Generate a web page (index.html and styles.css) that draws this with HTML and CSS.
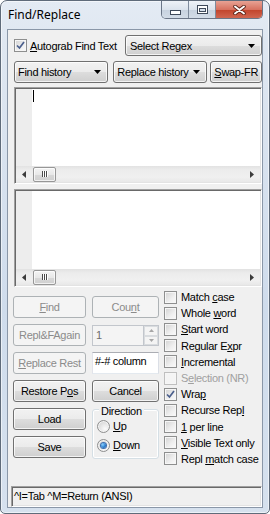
FILE: index.html
```html
<!DOCTYPE html>
<html lang="en">
<head>
    <meta charset="UTF-8">
    <meta name="viewport" content="width=device-width, initial-scale=1.0">
    <title>Find/Replace</title>
    <link rel="stylesheet" href="styles.css">
</head>
<body>
    <div class="window">
        <div class="titlebar">
            <span class="title">Find/Replace</span>
            <div class="caption">
                <span class="cap-btn cap-min">
                    <svg width="11" height="5" viewBox="0 0 11 5"><rect x="0.5" y="0.5" width="10" height="4" fill="#fff" stroke="#3f4a5a"/></svg>
                </span>
                <span class="cap-btn cap-max">
                    <svg width="11" height="9" viewBox="0 0 11 9"><rect x="0.5" y="0.5" width="10" height="8" fill="#fff" stroke="#3f4a5a"/><rect x="2.5" y="3.5" width="6" height="3" fill="#d6dfea" stroke="#3f4a5a"/></svg>
                </span>
                <span class="cap-btn cap-close">
                    <svg width="13" height="10" viewBox="0 0 13 10"><path d="M2 1.5 L11 8.5 M11 1.5 L2 8.5" stroke="#5a2319" stroke-width="3.6" stroke-linecap="round"/><path d="M2 1.5 L11 8.5 M11 1.5 L2 8.5" stroke="#fff" stroke-width="1.9" stroke-linecap="round"/></svg>
                </span>
            </div>
        </div>

        <div class="client">
            <div class="top-row">
                <label class="check autograb">
                    <span class="cb checked"><svg width="11" height="11" viewBox="0 0 11 11"><path d="M2 5.5 L4.5 8 L9 2" fill="none" stroke="#4b5f8c" stroke-width="1.7"/></svg></span>
                    <span><u>A</u>utograb Find Text</span>
                </label>
                <div class="combo regex">Select Regex<svg class="arrow" width="7" height="4" viewBox="0 0 7 4"><polygon points="0,0 7,0 3.5,4" fill="#000"/></svg></div>
            </div>

            <div class="history-row">
                <div class="combo history">Find history<svg class="arrow" width="7" height="4" viewBox="0 0 7 4"><polygon points="0,0 7,0 3.5,4" fill="#000"/></svg></div>
                <div class="combo history">Replace history<svg class="arrow" width="7" height="4" viewBox="0 0 7 4"><polygon points="0,0 7,0 3.5,4" fill="#000"/></svg></div>
                <div class="btn swap"><span><u>S</u>wap-FR</span></div>
            </div>

            <div class="editor find-edit">
                <div class="editor-body">
                    <div class="gutter"></div>
                    <div class="text-area"><span class="caret"></span></div>
                </div>
                <div class="hscroll">
                    <span class="sb-arrow"><svg width="4" height="7" viewBox="0 0 4 7"><polygon points="4,0 4,7 0,3.5" fill="#3c3c3c"/></svg></span>
                    <span class="thumb"><span class="grip"></span></span>
                    <span class="sb-arrow right"><svg width="4" height="7" viewBox="0 0 4 7"><polygon points="0,0 0,7 4,3.5" fill="#3c3c3c"/></svg></span>
                </div>
            </div>

            <div class="editor replace-edit">
                <div class="editor-body">
                    <div class="gutter"></div>
                    <div class="text-area"></div>
                </div>
                <div class="hscroll">
                    <span class="sb-arrow"><svg width="4" height="7" viewBox="0 0 4 7"><polygon points="4,0 4,7 0,3.5" fill="#3c3c3c"/></svg></span>
                    <span class="thumb"><span class="grip"></span></span>
                    <span class="sb-arrow right"><svg width="4" height="7" viewBox="0 0 4 7"><polygon points="0,0 0,7 4,3.5" fill="#3c3c3c"/></svg></span>
                </div>
            </div>

            <div class="lower">
                <div class="actions">
                    <div class="btn disabled"><span><u>F</u>ind</span></div>
                    <div class="btn disabled"><span>Cou<u>n</u>t</span></div>
                    <div class="btn disabled"><span>Repl&amp;FAgain</span></div>
                    <div class="spin">
                        <div class="spin-edit">1</div>
                        <div class="spin-btns">
                            <span class="spin-btn"><svg width="5" height="3" viewBox="0 0 5 3"><polygon points="0,3 5,3 2.5,0" fill="#a6a6a6"/></svg></span>
                            <span class="spin-btn"><svg width="5" height="3" viewBox="0 0 5 3"><polygon points="0,0 5,0 2.5,3" fill="#a6a6a6"/></svg></span>
                        </div>
                    </div>
                    <div class="btn disabled"><span><u>R</u>eplace Rest</span></div>
                    <div class="textbox">#-# column</div>
                    <div class="btn"><span>Restore P<u>o</u>s</span></div>
                    <div class="btn"><span>Cancel</span></div>
                    <div class="btn"><span>Load</span></div>
                    <div class="group">
                        <span class="group-title">Direction</span>
                        <label class="radio-row"><span class="radio"></span><span><u>U</u>p</span></label>
                        <label class="radio-row"><span class="radio checked"><span class="dot"></span></span><span><u>D</u>own</span></label>
                    </div>
                    <div class="btn"><span>Save</span></div>
                </div>

                <div class="options">
                    <label class="check"><span class="cb"></span><span>Match <u>c</u>ase</span></label>
                    <label class="check"><span class="cb"></span><span>Whole <u>w</u>ord</span></label>
                    <label class="check"><span class="cb"></span><span><u>S</u>tart word</span></label>
                    <label class="check"><span class="cb"></span><span>Regular E<u>x</u>pr</span></label>
                    <label class="check"><span class="cb"></span><span><u>I</u>ncremental</span></label>
                    <label class="check off"><span class="cb"></span><span>S<u>e</u>lection (NR)</span></label>
                    <label class="check"><span class="cb checked"><svg width="11" height="11" viewBox="0 0 11 11"><path d="M2 5.5 L4.5 8 L9 2" fill="none" stroke="#4b5f8c" stroke-width="1.7"/></svg></span><span>Wra<u>p</u></span></label>
                    <label class="check"><span class="cb"></span><span>Recurse Rep<u>l</u></span></label>
                    <label class="check"><span class="cb"></span><span><u>1</u> per line</span></label>
                    <label class="check"><span class="cb"></span><span><u>V</u>isible Text only</span></label>
                    <label class="check"><span class="cb"></span><span>Repl <u>m</u>atch case</span></label>
                </div>
            </div>

            <div class="status">^I=Tab ^M=Return (ANSI)</div>
        </div>
    </div>
</body>
</html>
```

FILE: styles.css
```css
* {
    box-sizing: border-box;
}
html, body {
    margin: 0;
    padding: 0;
}
body {
    width: 270px;
    height: 514px;
    overflow: hidden;
    background: #ffffff;
    font-family: "Liberation Sans", Arial, sans-serif;
    font-size: 11px;
    letter-spacing: -0.3px;
    color: #000;
}
u {
    text-decoration: underline;
    text-underline-offset: 1px;
}

/* window frame (Win7 style) */
.window {
    width: 270px;
    height: 514px;
    display: flex;
    flex-direction: column;
    padding: 0 6px 5px 6px;
    border: 1px solid #5f6b7a;
    border-radius: 7px 7px 5px 5px;
    background: linear-gradient(to bottom, #e4ebf4 0, #dfe7f1 40px, #cfdcec 60%, #d6e1ee 100%);
    box-shadow: inset 0 0 0 1px rgba(255, 255, 255, 0.55);
}
.titlebar {
    height: 28px;
    display: flex;
    justify-content: space-between;
    align-items: flex-start;
}
.title {
    font-family: "Noto Sans", "Open Sans", sans-serif;
    font-size: 12px;
    letter-spacing: 0;
    line-height: 28px;
    padding-left: 1px;
}
.caption {
    display: flex;
    width: 102px;
    height: 18px;
    border: 1px solid #6b7687;
    border-top: none;
    border-radius: 0 0 5px 5px;
    overflow: hidden;
}
.cap-btn {
    width: 27px;
    display: flex;
    align-items: center;
    justify-content: center;
    border-right: 1px solid #7f8b9c;
    background: linear-gradient(to bottom, #eef2f7 0, #dbe3ec 50%, #c7d2df 51%, #d3dce7 100%);
}
.cap-min svg {
    margin-top: 6px;
}
.cap-close {
    width: 46px;
    border-right: none;
    background: linear-gradient(to bottom, #e8a294 0, #d77260 50%, #c2432b 51%, #d06650 100%);
}

/* client area */
.client {
    flex: 1;
    display: flex;
    flex-direction: column;
    border: 1px solid #8a97a8;
    background: #f0f0f0;
}
.top-row {
    display: flex;
    align-items: center;
    height: 21px;
    margin: 5px 0 0 6px;
}
.check {
    display: flex;
    align-items: center;
    white-space: nowrap;
}
.autograb {
    width: 111px;
}
.cb {
    width: 13px;
    height: 13px;
    flex: none;
    margin-right: 3px;
    border: 1px solid #8e8f8f;
    background: linear-gradient(135deg, #d2d2d2 0, #efefef 60%, #fbfbfb 100%);
    box-shadow: inset 0 0 0 1px #f6f6f6;
    display: flex;
    align-items: center;
    justify-content: center;
}
.cb svg {
    display: block;
}

/* combos and buttons */
.combo,
.btn {
    height: 21px;
    border: 1px solid #707070;
    border-radius: 3px;
    background: linear-gradient(to bottom, #f2f2f2 0, #ebebeb 50%, #dddddd 51%, #cfcfcf 100%);
    box-shadow: inset 0 0 0 1px rgba(255, 255, 255, 0.75);
    white-space: nowrap;
}
.combo {
    display: flex;
    align-items: center;
    justify-content: space-between;
    padding: 0 6px 0 4px;
}
.regex {
    width: 137px;
}
.history-row {
    display: flex;
    height: 22px;
    margin: 5px 0 0 6px;
}
.history-row .combo,
.history-row .btn {
    height: 22px;
}
.history {
    width: 95px;
    padding-left: 3px;
    margin-right: 5px;
}
.history + .history {
    margin-right: 3px;
}
.swap {
    width: 52px;
}
.btn {
    display: flex;
    align-items: center;
    justify-content: center;
}
.btn.disabled {
    border-color: #adb2b5;
    background: #f4f4f4;
    box-shadow: none;
    color: #8b8b8b;
}

/* editors */
.editor {
    width: 248px;
    margin-left: 6px;
    display: flex;
    flex-direction: column;
    padding: 1px;
    border: 1px solid;
    border-color: #a0a0a0 #ffffff #ffffff #a0a0a0;
    box-shadow: inset 1px 1px 0 #696969, inset -1px -1px 0 #e3e3e3;
    background: #fff;
}
.find-edit {
    height: 97px;
    margin-top: 4px;
}
.replace-edit {
    height: 98px;
    margin-top: 5px;
}
.editor-body {
    flex: 1;
    display: flex;
}
.gutter {
    width: 16px;
    background: #ededed;
}
.text-area {
    flex: 1;
    background: #fff;
}
.caret {
    display: block;
    width: 1px;
    height: 12px;
    margin: 1px 0 0 1px;
    background: #000;
}
.hscroll {
    height: 16px;
    display: flex;
    align-items: center;
    background: linear-gradient(to bottom, #e2e2e2 0, #ececec 25%, #f0f0f0 70%, #e8e8e8 100%);
}
.sb-arrow {
    width: 16px;
    height: 16px;
    display: flex;
    align-items: center;
    justify-content: center;
}
.sb-arrow.right {
    margin-left: auto;
}
.thumb {
    width: 23px;
    height: 15px;
    margin-left: 1px;
    border: 1px solid #979797;
    border-radius: 2px;
    background: linear-gradient(to bottom, #f4f4f4 0, #e8e8e8 50%, #d8d8d8 51%, #d0d0d0 100%);
    box-shadow: inset 0 0 0 1px rgba(255, 255, 255, 0.7);
    display: flex;
    align-items: center;
    justify-content: center;
}
.grip {
    width: 6px;
    height: 6px;
    background: repeating-linear-gradient(to right, #4b4b4b 0, #4b4b4b 1px, #ffffff 1px, #ffffff 2px);
}

/* lower section */
.lower {
    display: flex;
    margin: 2px 0 0 5px;
}
.actions {
    width: 146px;
    padding-top: 7px;
    display: grid;
    grid-template-columns: 73px 67px;
    grid-template-rows: repeat(6, 22px);
    column-gap: 6px;
    row-gap: 6px;
}
.actions .btn {
    height: 22px;
}
.spin {
    display: flex;
    height: 21px;
    margin-top: 1px;
}
.spin-edit {
    width: 51px;
    border: 1px solid #c2c6cc;
    border-right: none;
    background: #f4f4f4;
    color: #6d6d6d;
    padding: 3px 0 0 3px;
}
.spin-btns {
    width: 16px;
    display: flex;
    flex-direction: column;
    border: 1px solid #c2c6cc;
}
.spin-btn {
    flex: 1;
    display: flex;
    align-items: center;
    justify-content: center;
    background: #f4f4f4;
    border: 1px solid #d9dcdf;
}
.textbox {
    border: 1px solid;
    border-color: #abadb3 #dbdfe6 #e3e9ef #e2e3ea;
    background: #fff;
    padding: 2px 0 0 2px;
}
.group {
    grid-row: 5 / span 2;
    grid-column: 2;
    height: 50px;
    margin-top: 1px;
    border: 1px solid #d5dfe5;
    border-radius: 3px;
    box-shadow: inset 0 0 0 1px #ffffff;
    padding-left: 4px;
}
.group-title {
    display: block;
    width: max-content;
    margin: -5px 0 0 2px;
    padding: 0 2px;
    line-height: 12px;
    background: #f0f0f0;
}
.radio-row {
    display: flex;
    align-items: center;
    height: 16px;
    margin-top: 1px;
}
.radio-row + .radio-row {
    margin-top: 3px;
}
.radio {
    width: 13px;
    height: 13px;
    margin-right: 3px;
    border-radius: 50%;
    border: 1px solid #8e8f8f;
    background: radial-gradient(circle at 65% 70%, #fbfbfb 0, #e6e6e6 45%, #c9c9c9 100%);
    box-shadow: inset 0 0 0 1px #f4f4f4;
    display: flex;
    align-items: center;
    justify-content: center;
}
.dot {
    width: 5px;
    height: 5px;
    border-radius: 50%;
    background: radial-gradient(circle at 35% 35%, #8ad0ff 0, #2a7fd0 55%, #1a4f9a 100%);
    box-shadow: 0 0 0 1px #3d6fb0;
}

.options {
    margin-left: 5px;
}
.options .check {
    height: 16.2px;
}
.options .cb {
    margin-right: 4px;
}
.check.off {
    color: #a0a0a0;
}
.check.off .cb {
    border-color: #bfbfbf;
    background: #f4f4f4;
}

/* status line */
.status {
    margin: auto 0 0 3px;
    width: 251px;
    height: 21px;
    padding: 1px 0 0 2px;
    border: 1px solid;
    border-color: #a0a0a0 #ffffff #ffffff #a0a0a0;
    box-shadow: inset 1px 1px 0 #696969, inset -1px -1px 0 #e3e3e3;
    line-height: 16px;
    white-space: nowrap;
}
```
